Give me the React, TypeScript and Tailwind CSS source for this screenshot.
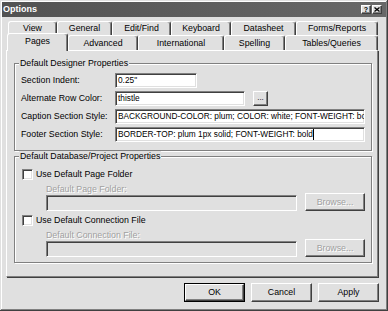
import React from "react";

const raised =
  "bg-[#e0e0e0] border border-t-white border-l-white border-r-[#404040] border-b-[#404040] shadow-[inset_-1px_-1px_0_#808080]";
const sunken =
  "border border-t-[#808080] border-l-[#808080] border-b-white border-r-white shadow-[inset_1px_1px_0_#404040,inset_-1px_-1px_0_#e0e0e0]";
const tabCls =
  "flex items-center justify-center border-t border-l border-r border-t-white border-l-white border-r-[#404040] shadow-[inset_-1px_0_0_#808080] rounded-t-[3px] bg-[#e0e0e0]";
const disabledText = "text-[#a0a0a0] [text-shadow:1px_1px_0_#ffffff]";

function BackTab({ label, w }: { label: string; w: number }) {
  return (
    <div className={`${tabCls} h-[14px]`} style={{ width: w }}>
      {label}
    </div>
  );
}

function FrontTab({ label, w, selected }: { label: string; w: number; selected?: boolean }) {
  return (
    <div
      className={`${tabCls} ${selected ? "h-[18px] -mb-[1px] relative z-10 pb-[2px]" : "h-[15px]"}`}
      style={{ width: w }}
    >
      {label}
    </div>
  );
}

function Row({ label, children }: { label: string; children: React.ReactNode }) {
  return (
    <div className="flex items-center h-[15px]">
      <div className="w-[94px] shrink-0">{label}</div>
      {children}
    </div>
  );
}

function TextBox({ w, value, caret }: { w: number; value: string; caret?: boolean }) {
  return (
    <div
      className={`${sunken} bg-white h-[15px] flex items-center pl-[2px] overflow-hidden whitespace-nowrap text-[8.3px]`}
      style={{ width: w }}
    >
      <span>{value}</span>
      {caret && <span className="inline-block w-[1px] h-[11px] bg-black" />}
    </div>
  );
}

function CheckRow({ label }: { label: string }) {
  return (
    <div className="flex items-center h-[13px] pl-[7px]">
      <div className={`${sunken} bg-white w-[11px] h-[11px]`} />
      <span className="ml-[3px]">{label}</span>
    </div>
  );
}

function FolderBlock({ label }: { label: string }) {
  return (
    <>
      <div className={`pl-[31px] h-[10px] leading-[10px] mt-[3px] ${disabledText}`}>{label}</div>
      <div className="flex items-end h-[18px] pl-[31px] -mt-[1px]">
        <div className={`${sunken} bg-[#e0e0e0] w-[251px] h-[16px]`} />
        <div
          className={`${raised} ml-[8px] w-[60px] h-[18px] flex items-center justify-center ${disabledText}`}
        >
          Browse...
        </div>
      </div>
    </>
  );
}

export default function App() {
  return (
    <div className="w-[388px] h-[311px] bg-[#e0e0e0] p-[2px] flex flex-col text-[8.8px] leading-[11px] text-black font-['Liberation_Sans',Arial,sans-serif] shadow-[inset_-1px_-1px_0_#404040,inset_1px_1px_0_#e0e0e0,inset_-2px_-2px_0_#808080,inset_2px_2px_0_#ffffff] overflow-hidden">
      {/* Title bar */}
      <div className="h-[15px] bg-gradient-to-r from-[#525252] to-[#686868] flex items-center justify-between pl-[1px] pr-[4px]">
        <span className="text-white font-bold text-[9px]">Options</span>
        <div className="flex gap-[1px]">
          <div className={`${raised} w-[10px] h-[9px] flex items-center justify-center text-[7px] font-bold leading-none`}>
            ?
          </div>
          <div className={`${raised} w-[10px] h-[9px] flex items-center justify-center`}>
            <svg width="6" height="5" viewBox="0 0 6 5">
              <path d="M0.5 0.5 L5.5 4.5 M5.5 0.5 L0.5 4.5" stroke="#000" strokeWidth="1.3" />
            </svg>
          </div>
        </div>
      </div>

      {/* Tabs */}
      <div className="mt-[4px] ml-[6px] flex">
        <BackTab label="View" w={49} />
        <BackTab label="General" w={55} />
        <BackTab label="Edit/Find" w={59} />
        <BackTab label="Keyboard" w={60} />
        <BackTab label="Datasheet" w={65} />
        <BackTab label="Forms/Reports" w={82} />
      </div>
      <div className="ml-[5px] flex items-end h-[15px]">
        <FrontTab label="Pages" w={61} selected />
        <FrontTab label="Advanced" w={70} />
        <FrontTab label="International" w={86} />
        <FrontTab label="Spelling" w={61} />
        <FrontTab label="Tables/Queries" w={93} />
      </div>

      {/* Panel */}
      <div className="ml-[4px] w-[372px] h-[227px] shrink-0 border border-t-white border-l-white border-r-[#808080] border-b-[#808080] shadow-[1px_1px_0_#404040] pl-[7px] pt-[7px]">
        <fieldset className="w-[358px] border border-[#808080] shadow-[inset_1px_1px_0_#ffffff,1px_1px_0_#ffffff]">
          <legend className="ml-[4px] px-[1px] bg-[#e0e0e0] leading-[10px]">Default Designer Properties</legend>
          <div className="pl-[6px] pt-[5px] pb-[8px] flex flex-col gap-[3px]">
            <Row label="Section Indent:">
              <TextBox w={82} value={'0.25"'} />
            </Row>
            <Row label="Alternate Row Color:">
              <TextBox w={130} value="thistle" />
              <div className={`${raised} ml-[8px] w-[15px] h-[15px] flex items-center justify-center text-[8px] leading-none pb-[2px]`}>
                ...
              </div>
            </Row>
            <Row label="Caption Section Style:">
              <TextBox w={250} value="BACKGROUND-COLOR: plum; COLOR: white; FONT-WEIGHT: bold" />
            </Row>
            <Row label="Footer Section Style:">
              <TextBox w={250} value="BORDER-TOP: plum 1px solid; FONT-WEIGHT: bold" caret />
            </Row>
          </div>
        </fieldset>

        <fieldset className="w-[358px] border border-[#808080] shadow-[inset_1px_1px_0_#ffffff,1px_1px_0_#ffffff]">
          <legend className="ml-[4px] px-[1px] bg-[#e0e0e0] leading-[10px]">Default Database/Project Properties</legend>
          <div className="pt-[7px] pb-[5px] flex flex-col">
            <CheckRow label="Use Default Page Folder" />
            <FolderBlock label="Default Page Folder:" />
            <div className="mt-[3px]">
              <CheckRow label="Use Default Connection File" />
            </div>
            <FolderBlock label="Default Connection File:" />
          </div>
        </fieldset>
      </div>

      {/* Buttons */}
      <div className="mt-[6px] flex justify-end gap-[6px] pr-[7px]">
        <div className="w-[61px] h-[19px] border border-black flex">
          <div className={`${raised} flex-1 flex items-center justify-center`}>OK</div>
        </div>
        <div className={`${raised} w-[61px] h-[19px] flex items-center justify-center`}>Cancel</div>
        <div className={`${raised} w-[61px] h-[19px] flex items-center justify-center`}>Apply</div>
      </div>
    </div>
  );
}
